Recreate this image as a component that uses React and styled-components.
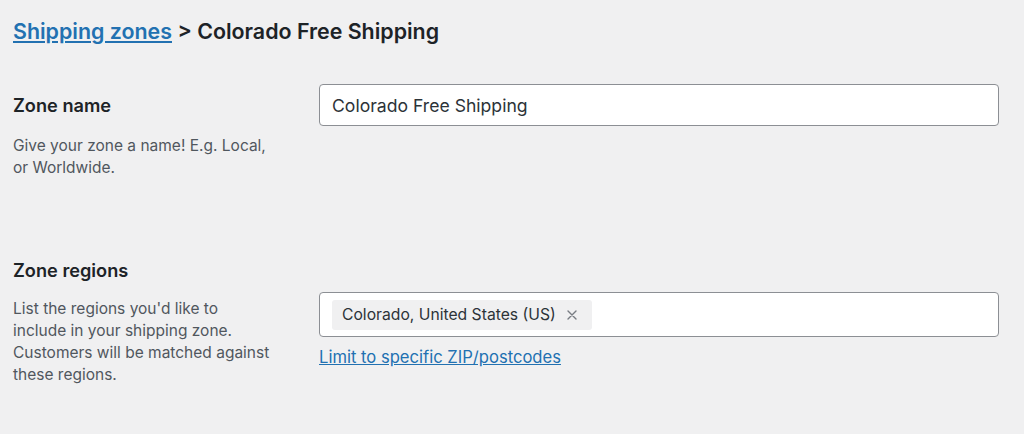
import React from 'react';
import styled, { createGlobalStyle } from 'styled-components';

const GlobalStyle = createGlobalStyle`
  html, body {
    margin: 0;
    padding: 0;
    background: #f0f0f1;
  }
  body {
    font-family: Inter, 'Noto Sans', sans-serif;
    color: #1d2327;
  }
`;

const Page = styled.div`
  padding: 18px 13px 40px;
  min-height: 434px;
  box-sizing: border-box;
`;

const Heading = styled.h2`
  margin: 0 0 40px;
  font-size: 21.4px;
  line-height: 26px;
  font-weight: 600;
  color: #1d2327;
`;

const Link = styled.a`
  color: #2271b1;
  text-decoration: underline;
  cursor: pointer;
`;

const Section = styled.div`
  display: grid;
  grid-template-columns: 306px 680px;
  margin-bottom: ${({ gap }) => gap || 0}px;
`;

const Label = styled.div`
  font-size: 18.2px;
  font-weight: 600;
  line-height: ${({ tall }) => (tall ? '42px' : '22px')};
  margin-bottom: ${({ spacing }) => spacing || 0}px;
  color: #1d2327;
`;

const Desc = styled.p`
  margin: 0;
  width: 262px;
  padding-top: ${({ offset }) => offset}px;
  font-size: 15.5px;
  line-height: 22px;
  color: #50575e;
`;

const TextInput = styled.input`
  box-sizing: border-box;
  width: 100%;
  height: 42px;
  padding: 0 12px;
  border: 1px solid #8c8f94;
  border-radius: 4px;
  background: #fff;
  font-family: inherit;
  font-size: 17.6px;
  color: #2c3338;
  outline: none;
`;

const Field = styled.div``;

const SelectBox = styled.div`
  box-sizing: border-box;
  height: 45px;
  display: flex;
  align-items: center;
  padding: 0 12px;
  border: 1px solid #8c8f94;
  border-radius: 4px;
  background: #fff;
`;

const Chip = styled.span`
  display: inline-flex;
  align-items: center;
  gap: 11px;
  height: 30px;
  padding: 0 15px 0 10px;
  border-radius: 3px;
  background: #f0f0f1;
  font-size: 15.7px;
  color: #2c3338;
`;

const Remove = styled.span`
  display: inline-flex;
  color: #787c82;
  cursor: pointer;
`;

const SubLink = styled(Link)`
  display: inline-block;
  margin-top: 9px;
  font-size: 16.6px;
  line-height: 22px;
`;

const Close = () => (
  <svg width="10" height="10" viewBox="0 0 10 10">
    <path d="M1 1L9 9M9 1L1 9" stroke="currentColor" strokeWidth="1.4" strokeLinecap="round" />
  </svg>
);

export default function App() {
  return (
    <>
      <GlobalStyle />
      <Page>
        <Heading>
          <Link>Shipping zones</Link> &gt; Colorado Free Shipping
        </Heading>

        <Section gap={80}>
          <Label tall>Zone name</Label>
          <Field>
            <TextInput defaultValue="Colorado Free Shipping" />
          </Field>
          <Desc offset={9}>Give your zone a name! E.g. Local, or Worldwide.</Desc>
          <div />
        </Section>

        <Section>
          <Label spacing={11}>Zone regions</Label>
          <div />
          <Desc offset={6}>
            List the regions you'd like to include in your shipping zone.
            Customers will be matched against these regions.
          </Desc>
          <Field>
            <SelectBox>
              <Chip>
                Colorado, United States (US)
                <Remove>
                  <Close />
                </Remove>
              </Chip>
            </SelectBox>
            <SubLink>Limit to specific ZIP/postcodes</SubLink>
          </Field>
        </Section>
      </Page>
    </>
  );
}
